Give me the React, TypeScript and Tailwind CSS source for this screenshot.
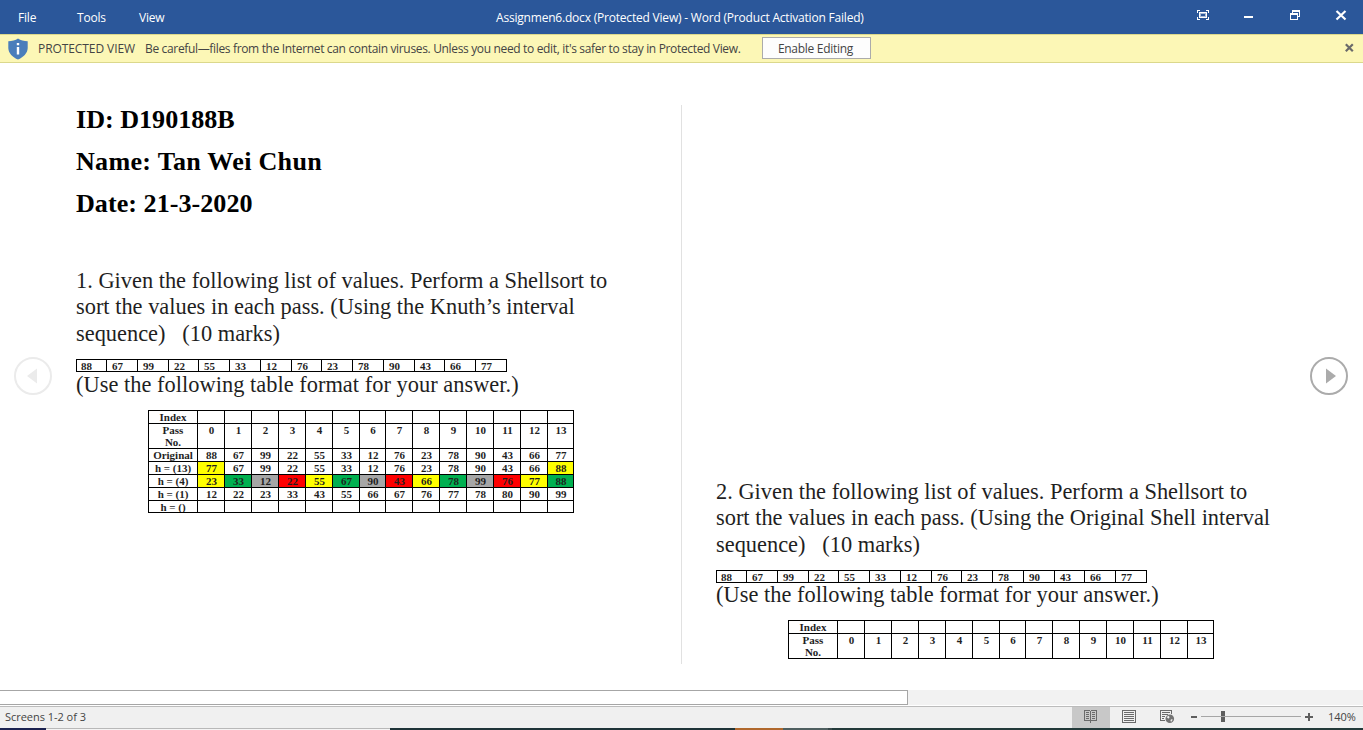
import React from "react";

const LIST = [88, 67, 99, 22, 55, 33, 12, 76, 23, 78, 90, 43, 66, 77];

const Y = "bg-[#ffff00]";
const G = "bg-[#00b050]";
const A = "bg-[#a6a6a6]";
const R = "bg-[#ff0000]";

type Row = { label: string; values: (number | string)[]; fills?: string[]; tall?: boolean };

const EMPTY = Array<string>(14).fill("");
const HEADER_ROWS: Row[] = [
  { label: "Index", values: EMPTY },
  { label: "Pass No.", values: LIST.map((_, i) => i), tall: true },
];
const PASS_ROWS: Row[] = [
  { label: "Original", values: LIST },
  {
    label: "h = (13)",
    values: [77, 67, 99, 22, 55, 33, 12, 76, 23, 78, 90, 43, 66, 88],
    fills: [Y, "", "", "", "", "", "", "", "", "", "", "", "", Y],
  },
  {
    label: "h = (4)",
    values: [23, 33, 12, 22, 55, 67, 90, 43, 66, 78, 99, 76, 77, 88],
    fills: [Y, G, A, R, Y, G, A, R, Y, G, A, R, Y, G],
  },
  { label: "h = (1)", values: [12, 22, 23, 33, 43, 55, 66, 67, 76, 77, 78, 80, 90, 99] },
  { label: "h = ()", values: EMPTY },
];

function ValueStrip() {
  return (
    <div className="grid h-[13px] w-[431px] grid-cols-[30px_31px_31px_30px_31px_31px_31px_30px_31px_31px_31px_30px_31px_31px] border-t border-l border-black text-[11px] leading-[12px] font-bold">
      {LIST.map((v, i) => (
        <div key={i} className="h-[12px] overflow-hidden border-r border-b border-black pl-[5px] first:pl-1">
          {v}
        </div>
      ))}
    </div>
  );
}

function PassTable({ rows }: { rows: Row[] }) {
  return (
    <div className="ml-[72px] w-[426px] border-t border-l border-black text-center text-[11px] leading-[12px] font-bold">
      {rows.map((row, r) => (
        <div
          key={r}
          className={`grid grid-cols-[49px_27px_27px_27px_27px_27px_27px_26px_27px_27px_27px_27px_27px_27px_26px] ${
            row.tall ? "h-[25px]" : r === 6 ? "h-[12px]" : "h-[13px]"
          }`}
        >
          <div className={`overflow-hidden border-r border-b border-black ${row.tall ? "px-2" : ""}`}>{row.label}</div>
          {row.values.map((v, i) => (
            <div
              key={i}
              className={`overflow-hidden border-r border-b border-black pl-px ${row.fills ? row.fills[i] : ""}`}
            >
              {v}
            </div>
          ))}
        </div>
      ))}
    </div>
  );
}

function Question({ lines, rows, tight }: { lines: string[]; rows: Row[]; tight?: boolean }) {
  return (
    <section>
      <div className="grid grid-rows-[26px_27px_26px] text-[22.4px] leading-[25px] whitespace-pre">
        {lines.map((l) => (
          <div key={l}>{l}</div>
        ))}
      </div>
      <div className="mt-[12px]">
        <ValueStrip />
      </div>
      <div
        className={`text-[22.4px] tracking-[0.025px] whitespace-pre ${tight ? "h-[37px] leading-[24px]" : "h-[38px] leading-[26px]"}`}
      >
        (Use the following table format for your answer.)
      </div>
      <PassTable rows={rows} />
    </section>
  );
}

function PageArrow({ left }: { left?: boolean }) {
  const c = left ? "#ebebeb" : "#ababab";
  return (
    <svg className="mt-[294px] h-[38px] w-[38px] shrink-0" viewBox="0 0 38 38">
      <circle cx="19" cy="19" r="18" fill="none" stroke={c} strokeWidth="2" />
      <path d={left ? "M23 11.500v15L13 19z" : "M16 11.500v15L26 19z"} fill={c} />
    </svg>
  );
}

function TitleBar() {
  return (
    <header className="flex h-[34px] bg-[#2b579a] text-[12px] leading-[36px] tracking-[-0.2px] whitespace-pre text-white">
      <div className="ml-[18px] w-[59px]">File</div>
      <div className="w-[62px]">Tools</div>
      <div className="w-[357px]">View</div>
      <div className="w-[701px]">Assignmen6.docx (Protected View) - Word (Product Activation Failed)</div>
      <svg className="h-[34px] w-[166px]" viewBox="1197 0 166 34" shapeRendering="crispEdges" fill="none">
        <path d="M1197.500 13v-2.500h2.500M1206 10.500h2.500v2.500M1208.500 17v2.500h-2.500M1200 19.500h-2.500v-2.500" stroke="#fff" />
        <path d="M1199 12h8v6h-8z" fill="#fff" />
        <path d="M1200 13h6v4h-6z" fill="#a9bbd8" />
        <path d="M1201 14h4v2h-4z" fill="#2b579a" />
        <path d="M1244 16h9v2h-9z" fill="#fff" />
        <path d="M1292.500 13v-2.500h7v6h-2.500M1292 11h8" stroke="#fff" />
        <path d="M1290 13h8v7h-8zM1291 15v4h6v-4z" fill="#fff" fillRule="evenodd" />
        <path d="M1336.500 11l9 8.500M1345.500 11l-9 8.500" stroke="#fff" strokeWidth="2.200" shapeRendering="auto" />
      </svg>
    </header>
  );
}

function MessageBar() {
  return (
    <div className="flex h-[29px] border-y border-[#dbd88c] bg-[#fcf7b6] text-[12px] leading-[28px] whitespace-pre text-[#444]">
      <svg className="mt-[3px] ml-2 h-[22px] w-5" viewBox="0 0 20 22">
        <path d="M10 .5C7.500 2.500 4 3.200.3 3.200V10c0 5 4.500 9.500 9.700 11.500 5.200-2 9.700-6.500 9.700-11.500V3.200C16 3.200 12.500 2.500 10 .5z" fill="#4a7ebb" />
        <path d="M8.800 5h2.400v2.300H8.800zM8.800 9h2.400v7.500H8.800z" fill="#fff" />
      </svg>
      <div className="ml-[10px] w-[107px] tracking-[-0.08px]">PROTECTED VIEW</div>
      <div className="w-[617px] tracking-[-0.34px]">
        Be careful—files from the Internet can contain viruses. Unless you need to edit, it's safer to stay in Protected View.
      </div>
      <button className="mt-[2px] h-[22px] w-[109px] border border-[#ababab] bg-[#fdfdfd] pr-[2px] text-center leading-[22px] tracking-[-0.28px]">
        Enable Editing
      </button>
      <svg className="mt-[8px] ml-[474px] h-[10px] w-[9px]" viewBox="0 0 9 10">
        <path d="M.8 1.200l7 7M7.800 1.200l-7 7" stroke="#6a6a6a" strokeWidth="2.200" />
      </svg>
    </div>
  );
}

function StatusBar() {
  return (
    <footer className="flex h-[22px] border-t border-[#bcbcbc] bg-[#f0f0f0] text-[11px] leading-[19px] text-[#444]">
      <div className="w-[1072px] pl-[5px] tracking-[-0.03px]">Screens 1-2 of 3</div>
      <div className="h-[21px] w-[38px] bg-[#c8c8c8]">
        <svg className="h-[21px] w-[38px]" viewBox="1072 707 38 21" shapeRendering="crispEdges" fill="none" stroke="#6a6a6a">
          <path d="M1084.500 710.500h5l1 1l1-1h5v10h-5l-1 1l-1-1h-5zM1090.500 711v12M1086 712.500h3M1086 714.500h3M1086 716.500h3M1086 718.500h3M1092 712.500h3M1092 714.500h3M1092 716.500h3M1092 718.500h3" />
        </svg>
      </div>
      <svg className="h-[21px] w-[218px]" viewBox="1110 707 218 21" shapeRendering="crispEdges" fill="none" stroke="#6a6a6a">
        <path d="M1122.500 710.500h13v12h-13zM1124 712.500h10M1124 714.500h10M1124 716.500h10M1124 718.500h10M1124 720.500h10" />
        <path d="M1171.500 714v-3.500h-11v10h4.500M1162 712.500h8M1162 714.500h6M1162 716.500h3M1162 718.500h2" />
        <circle cx="1169.800" cy="718.800" r="4.300" fill="#747474" stroke="none" shapeRendering="auto" />
        <path d="M1166.600 717l2.200-1.200.8 1.400-1.200 1.600zM1171 719.200l1.800.4-1.400 2.200-1-.8z" fill="#f0f0f0" stroke="none" shapeRendering="auto" />
        <path d="M1191 716h6v2h-6zM1305 716h8v2h-8zM1308 713h2v8h-2zM1221 711h4v11h-4z" fill="#5e5e5e" stroke="none" />
        <path d="M1201 716.500h100" stroke="#a6a6a6" />
      </svg>
      <div>140%</div>
    </footer>
  );
}

export default function App() {
  return (
    <div className="flex h-[730px] w-[1363px] flex-col overflow-hidden bg-white font-['Open_Sans',sans-serif]">
      <TitleBar />
      <MessageBar />
      <main className="flex h-[627px] font-['Liberation_Serif',serif] text-[#1f1f1f]">
        <div className="flex w-[76px] pl-[14px]">
          <PageArrow left />
        </div>
        <article className="w-[605px] pt-[36px]">
          <div className="h-[169px] text-[26.100px] leading-[42px] font-bold whitespace-pre text-black">
            <div>ID: D190188B</div>
            <div className="tracking-[0.28px]">Name: Tan Wei Chun</div>
            <div className="tracking-[0.03px]">Date: 21-3-2020</div>
          </div>
          <Question
            lines={[
              "1. Given the following list of values. Perform a Shellsort to",
              "sort the values in each pass. (Using the Knuth’s interval",
              "sequence)   (10 marks)",
            ]}
            rows={[...HEADER_ROWS, ...PASS_ROWS]}
          />
        </article>
        <div className="mt-[42px] h-[559px] w-px bg-[#e1e1e1]" />
        <article className="w-[628px] pt-[416px] pl-[34px]">
          <Question
            tight
            lines={[
              "2. Given the following list of values. Perform a Shellsort to",
              "sort the values in each pass. (Using the Original Shell interval",
              "sequence)   (10 marks)",
            ]}
            rows={HEADER_ROWS}
          />
        </article>
        <PageArrow />
      </main>
      <div className="h-[16px] border-b border-white bg-[#f2f2f2]">
        <div className="h-[15px] w-[908px] border border-l-0 border-[#a6a6a6] bg-white" />
      </div>
      <StatusBar />
      <div className="flex h-[2px] bg-[#233a3a]">
        <div className="w-[46px] bg-[#1b2250]" />
        <div className="w-[344px] border-t border-[#b8b8b8] bg-[#f4f4f4]" />
        <div className="w-[345px] bg-[#1f3438]" />
        <div className="w-[48px] bg-[#b0682c]" />
        <div className="w-[45px] bg-[#4f5f60]" />
        <div className="w-[4px] bg-[#38494a]" />
      </div>
    </div>
  );
}
